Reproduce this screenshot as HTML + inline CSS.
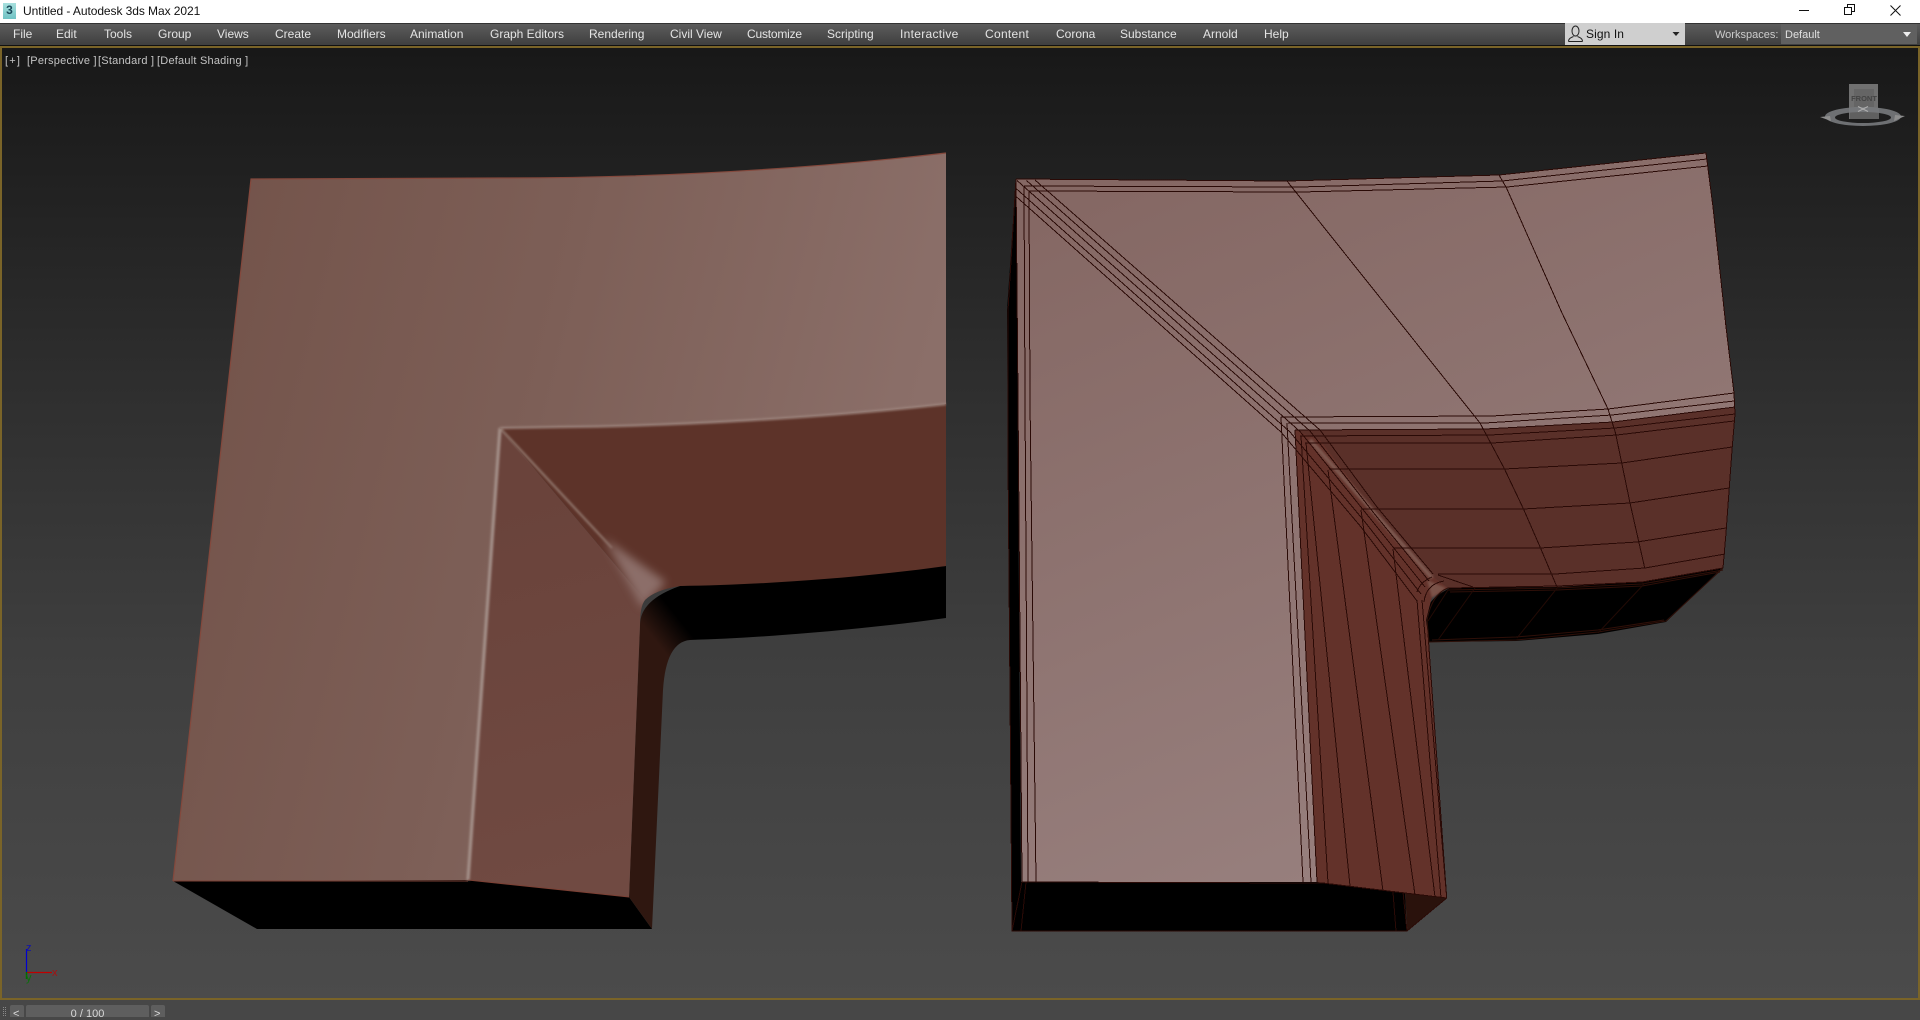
<!DOCTYPE html>
<html><head><meta charset="utf-8"><title>Untitled - Autodesk 3ds Max 2021</title>
<style>
html,body{margin:0;padding:0;width:1920px;height:1017px;overflow:hidden;background:#474747;font-family:"Liberation Sans",sans-serif;}
.a{position:absolute;white-space:nowrap;}
#title{left:0;top:0;width:1920px;height:23px;background:#fff;}
#menu{left:0;top:23px;width:1920px;height:22px;background:linear-gradient(#5c5c5c,#3f3f3f);border-top:1px solid #333;box-sizing:border-box;}
.m{position:absolute;top:27px;font-size:12px;line-height:14px;color:#e4e4e4;}
.l{position:absolute;top:54px;font-size:11px;line-height:14px;color:#c4c4c4;letter-spacing:.22px;white-space:nowrap;}
svg{position:absolute;left:0;top:0;}
</style></head><body>
<div class="a" id="title"></div>
<div class="a" style="left:0;top:45px;width:1920px;height:1px;background:#111"></div>
<div class="a" id="menu"></div>
<div class="a" style="left:23px;top:4px;font-size:12px;line-height:15px;color:#111;letter-spacing:-.07px">Untitled - Autodesk 3ds Max 2021</div>
<div class="a" style="left:3px;top:3px;width:13px;height:16px;background:linear-gradient(#a8e0de,#6fc2c4);color:#1a4a5a;font:bold 12px/15px 'Liberation Sans',sans-serif;text-align:center">3</div>
<span class="m" style="left:13px">File</span><span class="m" style="left:56px">Edit</span><span class="m" style="left:104px">Tools</span><span class="m" style="left:158px">Group</span><span class="m" style="left:217px">Views</span><span class="m" style="left:275px">Create</span><span class="m" style="left:337px">Modifiers</span><span class="m" style="left:410px">Animation</span><span class="m" style="left:490px">Graph Editors</span><span class="m" style="left:589px">Rendering</span><span class="m" style="left:670px">Civil View</span><span class="m" style="left:747px;letter-spacing:-.2px">Customize</span><span class="m" style="left:827px">Scripting</span><span class="m" style="left:900px;letter-spacing:.3px">Interactive</span><span class="m" style="left:985px;letter-spacing:.3px">Content</span><span class="m" style="left:1056px">Corona</span><span class="m" style="left:1120px">Substance</span><span class="m" style="left:1203px">Arnold</span><span class="m" style="left:1264px">Help</span>
<div class="a" style="left:1565px;top:23px;width:120px;height:22px;background:#cfcfcf"></div>
<div class="a" style="left:1586px;top:27px;font-size:12px;line-height:15px;color:#111;letter-spacing:.1px">Sign In</div>
<div class="a" style="left:1715px;top:28px;font-size:11px;line-height:14px;color:#ccc">Workspaces:</div>
<div class="a" style="left:1781px;top:24px;width:136px;height:20px;background:#606060"></div>
<div class="a" style="left:1785px;top:28px;font-size:11px;line-height:14px;color:#e0e0e0">Default</div>

<div class="a" style="left:0;top:46px;width:1920px;height:954px;box-sizing:border-box;border:2px solid #7a6428;border-top-width:2px;background:linear-gradient(#181818 0,#1c1c1c 6%,#2e2e2e 35%,#3f3f3f 65%,#4b4b4b 100%)"></div>
<span class="l" style="left:5px;letter-spacing:1.2px">[+]</span><span class="l" style="left:27px">[Perspective ]</span><span class="l" style="left:98px">[Standard ]</span><span class="l" style="left:157px">[Default Shading ]</span>

<svg width="1920" height="1017" viewBox="0 0 1920 1017">
<defs>
<linearGradient id="lt" gradientUnits="userSpaceOnUse" x1="180" y1="300" x2="900" y2="480"><stop offset="0" stop-color="#73534a"/><stop offset=".5" stop-color="#7d5f57"/><stop offset="1" stop-color="#8b6f69"/></linearGradient>
<linearGradient id="li" gradientUnits="userSpaceOnUse" x1="520" y1="500" x2="620" y2="880"><stop offset="0" stop-color="#6a433b"/><stop offset="1" stop-color="#704a42"/></linearGradient>
<linearGradient id="rt" gradientUnits="userSpaceOnUse" x1="1040" y1="220" x2="1320" y2="880"><stop offset="0" stop-color="#856864"/><stop offset="1" stop-color="#977f7d"/></linearGradient>
<linearGradient id="und" gradientUnits="userSpaceOnUse" x1="655" y1="640" x2="680" y2="620"><stop offset="0" stop-color="#2f1710"/><stop offset="1" stop-color="#000"/></linearGradient>
<filter id="b1" x="-20%" y="-20%" width="140%" height="140%"><feGaussianBlur stdDeviation="1"/></filter>
<filter id="b3" x="-40%" y="-40%" width="180%" height="180%"><feGaussianBlur stdDeviation="4.500"/></filter>
<clipPath id="cl"><rect x="0" y="48" width="946.500" height="950"/></clipPath>
<clipPath id="clf"><path d="M500 428L560 427C680 426 830 417 946 404V566C860 578 760 585 680 586Q655 590 645 600Q640 606 640 625L629 897 468 880Z"/></clipPath>
</defs>

<!-- sign-in icon -->
<g fill="none" stroke="#222" stroke-width="1"><ellipse cx="1575.500" cy="31" rx="3.500" ry="5"/><path d="M1568.500 41.500c0-3 2.500-4 5-5M1582.500 41.500c0-3-2.500-4-5-5M1568.500 41.500h14"/></g>
<path d="M1672.500 32h7l-3.500 4z" fill="#222"/>
<path d="M1903 32h8l-4 5z" fill="#eee"/>
<!-- window controls -->
<path d="M1799 10.500h10" stroke="#111"/>
<path d="M1844.500 7.500h7v7h-7zM1847.500 7.500v-3h7v7h-3" stroke="#111" fill="none"/>
<path d="M1890.500 5.500l10 10M1900.500 5.500l-10 10" stroke="#111" fill="none"/>

<!-- LEFT OBJECT -->
<g clip-path="url(#cl)">
<path d="M173 881L468 880 629 897 652 929 257 929Z" fill="#000"/>
<path d="M640 625Q640 600 680 586L946 566V618C860 630 760 638 690 640Q666 642 663 690L652 929 629 897Z" fill="url(#und)"/>
<path d="M500 428L560 427C680 426 830 417 946 404V566C860 578 760 585 680 586Q655 590 645 600Z" fill="#5d3329"/>
<path d="M500 428L645 600Q640 606 640 625L629 897 468 880Z" fill="url(#li)"/>
<path d="M251 179L500 178C650 178 800 170 946 153V404C830 417 680 426 560 427L500 428 468 880 173 881Z" fill="url(#lt)"/>
<path d="M173 881L251 179 500 178C650 178 800 170 946 153" fill="none" stroke="#84483c" stroke-width="1.200"/>
<path d="M468 880L629 897M173 881H468" stroke="#7c4034" stroke-width="1" fill="none"/>
<g fill="none" filter="url(#b1)">
<path d="M500 428L468 880" stroke="#a49089" stroke-width="3.200"/>
<path d="M500 428L560 427C680 426 830 417 946 404" stroke="#9d847d" stroke-width="2.200"/>
<path d="M500 428L612 548" stroke="#93796f" stroke-width="2"/>
</g>
<g clip-path="url(#clf)"><path d="M604 538L666 582 642 608Z" fill="#8c6e69" filter="url(#b3)"/></g>
</g>

<!-- RIGHT OBJECT -->
<path d="M1021 882L1323 882 1405 892 1407 931H1012L1008 460 1007 310 1016 179Z" fill="#000"/>
<path d="M1405 892L1446.700 898 1407.300 931Z" fill="#2a120c"/>
<path d="M1450 588L1557 586 1642 581 1723 567 1666 622 1598 634 1516 641 1428 642 1426 620 1430 603 1437 595Z" fill="#000"/>
<path d="M1295 430L1485 429 1613 422 1735 407 1732 450 1726 533 1723 568 1642 582 1557 587 1448 588 1435 578 1400 545 1320 450Z" fill="#5a3029"/>
<path d="M1295 430L1320 440 1400 545 1435 578 1448 588 1432 597 1426 620 1429 641 1446.700 898 1405 893 1323 883 1317 882Z" fill="#63322a"/>
<path d="M1016 179L1287 181 1499 175 1706 153 1713 207 1726 327 1734 393 1735 407 1613 422 1485 429 1295 430 1317 882 1022 882 1018 400Z" fill="url(#rt)"/>
<path d="M1310 440L1432 578" stroke="#7d5850" stroke-width="4" filter="url(#b1)" fill="none"/>
<path d="M1427 580L1446 588 1432 598Z" fill="#7a524a" filter="url(#b1)"/>
<g fill="none" stroke="#2a0a06" stroke-width="1" shape-rendering="crispEdges">
<path d="M1016 179L1287 181 1499 175 1706 153 1713 207 1726 327 1734 393 1735 414 1732 450 1726 533 1723 568"/>
<path d="M1024 186L1300 187 1502 181 1707 159"/>
<path d="M1029 191L1300 192 1507 187 1708 166"/>
<path d="M1016 179L1018 400 1022 882M1024 186L1025 400 1028 882M1029 191L1030 400 1036 882"/>
<path d="M1035 180L1320 430 1377 507 1433 574M1026.500 180.500L1310 431 1373 512 1429 581M1017 180.500L1300 431.500 1369 517 1425 587M1015.500 188L1290 432 1365 522 1421 594M1015.500 196L1281 432 1361 527 1417 601"/>
<path d="M1287 181L1480 423 1504 468 1523.500 509 1540.500 548 1557 587"/>
<path d="M1499 175L1506.500 188 1562 313 1608 409 1615.500 433 1630 503 1644.700 568"/>
<path d="M1281 417L1492 416 1608 409 1734 393"/>
<path d="M1288 423L1485 423 1612 415 1734 401"/>
<path d="M1295 430L1485 429 1613 422 1735 407"/>
<path d="M1300 436L1490 435 1615 428 1735 414"/>
<path d="M1305 443L1492 443 1617 435 1734 421"/>
<path d="M1329 469L1504 469 1622 463 1732 447"/>
<path d="M1361 509L1523 509 1630 503 1729 488"/>
<path d="M1393 548L1540 548 1637 542 1726 528"/>
<path d="M1438 574L1555 574 1645 568 1725 554"/>
<path d="M1438 575L1473 587M1432 577Q1420 582 1417 592M1444 581Q1426 584 1424 602"/>
<path d="M1448 588L1557 586 1642 582 1723 568"/>
<path d="M1281 417L1303 882M1287 423L1311 882M1295 430L1317 882M1301 436L1328 883M1306 443L1350 886M1328 470L1383 891M1361 510L1415 895M1393 549L1435 897M1417 600L1441 898M1422 600L1446.700 898"/>
<path d="M1428 634L1446.700 898 1405 893 1323 883 1022 882"/>
<path d="M1016 179L1008 310 1008 460 1012 931H1407L1446.700 898"/>
<path d="M1022 882L1012 931M1026 882L1021 931M1393 892L1396 931M1403 892L1407 931"/>
</g>
<g fill="none" stroke="#2e0f08" stroke-width="1">
<path d="M1448 590L1557 588 1642 584 1723 570M1450 592L1557 590 1642 586 1720 572"/>
<path d="M1428 642L1516 640 1598 632 1666 621 1723 568M1432 640L1516 637 1598 630 1664 620"/>
<path d="M1448 588Q1432 594 1427 620L1429 642"/>
</g>
<g fill="none" stroke="#220a05" stroke-width="1">
<path d="M1475 588L1438 640M1448 590L1428 621M1558 587L1517 638M1645 583L1598 633"/>
</g>

<!-- view cube -->
<rect x="1849" y="84" width="29" height="35" fill="#707070"/>
<rect x="1854" y="89" width="20" height="18" fill="#656565"/>
<rect x="1850" y="108" width="29" height="11" fill="#606060"/>
<text x="1864" y="101" font-size="7.500" font-family="Liberation Sans" fill="#444" text-anchor="middle" font-weight="bold">FRONT</text>
<path fill-rule="evenodd" d="M1825 116.500a38 9.500 0 1 0 76 0a38 9.500 0 1 0-76 0ZM1835 117.500a28 5.500 0 1 1 56 0a28 5.500 0 1 1-56 0Z" fill="#787a7d" fill-opacity=".9"/>
<path d="M1820 117l10-1 1 5zM1905 116l-10-1-1 6z" fill="#8e8e8e"/>
<path d="M1858 106.500l5 2.500 5-2.500M1858 111.500l5-2.500 5 2.500" stroke="#b0b0b0" fill="none"/>
<!-- axis gizmo -->
<path d="M26.500 972V949" stroke="#0000d0" stroke-width="1.200"/>
<path d="M26.500 972.500H52" stroke="#c00000" stroke-width="1.200"/>
<path d="M26.500 972V979" stroke="#007000" stroke-width="1.500"/>
<text x="26" y="951" font-size="11" font-family="Liberation Sans" fill="#1010b0">z</text>
<text x="52" y="976" font-size="11" font-family="Liberation Sans" fill="#a81010">x</text>
<text x="26" y="981" font-size="11" font-family="Liberation Sans" fill="#0a700a">y</text>
<!-- timeline grip -->
<path d="M3.500 1007v10M5.500 1007v10" stroke="#8a8a8a" stroke-dasharray="1 1"/>
</svg>

<div class="a" style="left:10px;top:1005px;width:14px;height:12px;background:#5e5e5e;border-radius:2px 2px 0 0"></div>
<div class="a" style="left:13px;top:1008px;font-size:11px;line-height:12px;color:#ddd">&lt;</div>
<div class="a" style="left:26px;top:1005px;width:123px;height:12px;background:#5e5e5e;border-radius:2px 2px 0 0"></div>
<div class="a" style="left:26px;top:1008px;width:123px;text-align:center;font-size:11px;line-height:12px;color:#d8d8d8">0 / 100</div>
<div class="a" style="left:151px;top:1005px;width:14px;height:12px;background:#5e5e5e;border-radius:2px 2px 0 0"></div>
<div class="a" style="left:154px;top:1008px;font-size:11px;line-height:12px;color:#ddd">&gt;</div>
</body></html>
